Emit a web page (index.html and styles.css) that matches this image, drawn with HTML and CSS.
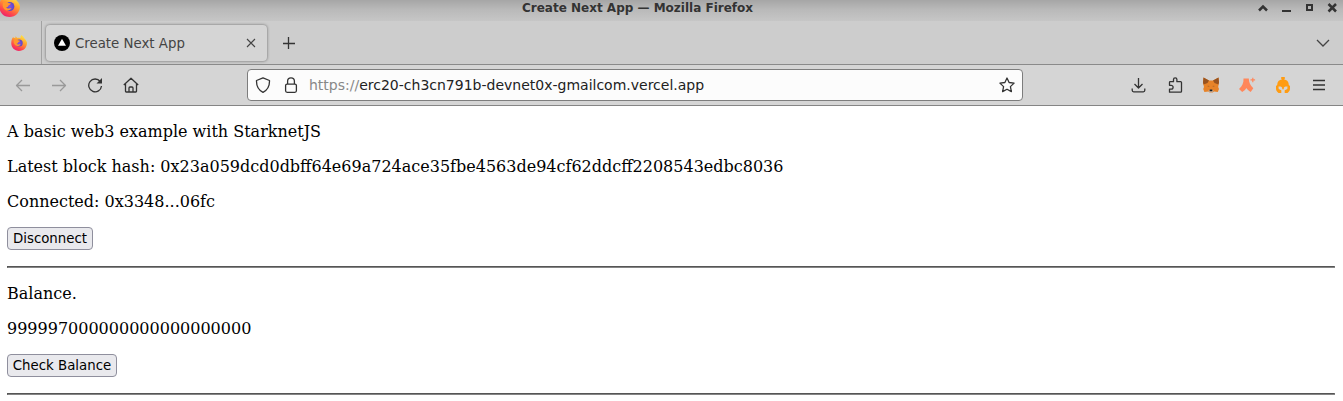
FILE: index.html
```html
<!DOCTYPE html>
<html lang="en">
<head>
<meta charset="utf-8">
<title>Create Next App</title>
<link rel="stylesheet" href="styles.css">
</head>
<body>
<svg width="0" height="0" class="defs">
  <defs>
    <linearGradient id="flame" x1=".8" y1="0" x2=".25" y2="1"><stop offset="0" stop-color="#fff04a"/><stop offset=".4" stop-color="#ffa12d"/><stop offset=".75" stop-color="#ff474c"/><stop offset="1" stop-color="#e91b72"/></linearGradient>
    <radialGradient id="globe"><stop offset="0" stop-color="#8651e5"/><stop offset="1" stop-color="#5b48c4"/></radialGradient>
    <symbol id="firefox" viewBox="0 0 16 16">
      <path fill="url(#flame)" d="M15.400 6.200c-.4-1-1.100-2-1.800-2.400-.8-1.700-1.500-2.500-3.300-3.800-.9 1.200-.9 2.400-.7 3.200-1-.3-2.200-.5-3.300-.3L4.500 1.300 4.300 3.200C3.400 3 2.700 2.900 2 2.300 1 3.500.4 5 .3 7.600-.1 12.200 3.300 16 8 16c4.700 0 8-3.600 8-8 0-.6-.2-1.300-.6-1.800z"/>
      <circle cx="8.200" cy="8" r="3.500" fill="url(#globe)"/>
      <path fill="#ff982e" d="M3.300 4.800c1.500-.9 3-.5 3.800.5l2 .5c-.2.9-1.600 1.100-2 1.700-.2.900-.8 1.200-1.700 1.200 1.500 1.400 3 .3 4.200.7-.8 1.500-3.800 2.300-5.500.6C2.500 8.500 2.500 6.500 3.300 4.800z"/>
    </symbol>
  </defs>
</svg>
<header class="titlebar">
  <svg class="app-icon" width="21" height="21"><use href="#firefox"/></svg>
  <span class="window-title">Create Next App — Mozilla Firefox</span>
  <svg class="window-controls" width="80" height="16" viewBox="0 0 80 16" fill="none" stroke="#333" stroke-width="2.500"><path d="M1 10.500l4-4 4 4"/><path d="M24 11h9" stroke-width="2"/><path d="M49 5h5v5h-5z" stroke-width="2"/><path d="M70.500 4l7.500 7.500m0-7.500l-7.500 7.500"/></svg>
</header>
<nav class="tabs">
  <div class="pinned"><svg width="16" height="16"><use href="#firefox"/></svg></div>
  <div class="tab">
    <svg width="16" height="16" viewBox="0 0 16 16"><circle cx="8" cy="8" r="8"/><path fill="#fff" d="M8 3.700l4 7H4z"/></svg>
    <span class="tab-title">Create Next App</span>
    <svg class="tab-close" width="10" height="10" viewBox="0 0 10 10" fill="none" stroke="#444" stroke-width="1.100"><path d="M1 1l8 8M9 1L1 9"/></svg>
  </div>
  <svg class="new-tab" width="12" height="12" viewBox="0 0 12 12" fill="none" stroke="#333" stroke-width="1.300"><path d="M0 6.500h12M5.500 0v12"/></svg>
  <svg class="all-tabs" width="14" height="8" viewBox="0 0 14 8" fill="none" stroke="#444" stroke-width="1.300"><path d="M1 1l6 6 6-6"/></svg>
</nav>
<div class="toolbar">
  <div class="nav-buttons">
    <svg class="muted" width="16" height="16" viewBox="0 0 16 16"><path d="M15 8.500H1.500M7 3L1.500 8.500 7 14"/></svg>
    <svg class="muted" width="16" height="16" viewBox="0 0 16 16"><path d="M1 8.500h13.500M9 3l5.500 5.500L9 14"/></svg>
    <svg width="16" height="16" viewBox="0 0 16 16"><path d="M13.200 4.500A6.400 6.400 0 1 0 14.500 9"/><path fill="#333" stroke="none" d="M15 1v5.500H9.500z"/></svg>
    <svg width="16" height="16" viewBox="0 0 16 16"><path d="M.8 8L8 1.200 15.200 8M2.500 7v7.300q0 .7.700.7h9.600q.7 0 .7-.7V7M6 15v-4q0-1 1-1h2q1 0 1 1v4"/></svg>
  </div>
  <div class="address">
    <svg width="16" height="16" viewBox="0 0 16 16"><path d="M8 .8L14.500 3.500C14.700 9 12.500 13 8 15.300 3.500 13 1.300 9 1.500 3.500z"/></svg>
    <svg width="16" height="16" viewBox="0 0 16 16"><rect x="2.600" y="7.100" width="10.800" height="8.200" rx="1.500"/><path d="M4.600 7V4.200a3.400 3.400 0 0 1 6.800 0V7"/></svg>
    <span class="url"><span class="scheme">https://</span>erc20-ch3cn791b-devnet0x-gmailcom.vercel.app</span>
    <svg width="16" height="16" viewBox="0 0 16 16"><path d="M8 1l2.100 4.500 5 .6-3.700 3.500 1 5L8 12.200l-4.400 2.400 1-5L.9 6.100l5-.6z"/></svg>
  </div>
  <div class="extensions">
    <svg width="16" height="16" viewBox="0 0 16 16"><path d="M8.500 1v10M4.500 7l4 4 4-4M2.200 11.500v1.800q0 1.500 1.500 1.500h9.600q1.500 0 1.500-1.500v-1.800"/></svg>
    <svg width="16" height="16" viewBox="0 0 16 16"><path d="M1.500 15.200V12.100h1.700a1.900 1.900 0 0 0 0-3.800H1.500V5.400q0-.7.700-.7H5.500V2.500a1.700 1.700 0 0 1 3.400 0v2.200h3.700q.9 0 .9.900v8.700q0 .9-.9.900z"/></svg>
    <svg class="picture" width="16" height="16" viewBox="0 0 16 16"><path fill="#e78328" d="M.5.500L6 3.500h4L15.500.5l.5 5-.8 4.500.8 2-1.200 3-3.800-.6-1.300 1.200h-3l-1.300-1.200L1.400 15 .2 12l.8-2L0 6z"/><path fill="#98531f" d="M.5.500L6 3.500 4.500 6 .6 7.500 0 5.500zM15.500.5L10 3.500 11.500 6l3.900 1.500.6-2z"/><path fill="#a9652d" d="M4 9l2-.3.400 1.400zm8 0l-2-.3-.4 1.400z"/><path fill="#d5b49b" d="M5.300 13.500l1.700-.7h2l1.700.7L9.500 15.500h-3z"/><path fill="#172026" d="M6.800 12.600h2.400l.3 1.700h-3z"/></svg>
    <svg class="picture" width="18" height="16" viewBox="0 0 18 16"><path fill="#ff875b" d="M4.500 1.500h5.300C9.800 5.500 11.300 8 14.300 11.200L11.700 15C9.600 13.500 8.200 12.200 7.300 11 6.400 12.600 5.200 13.800 3.200 15L0 12.100C3.300 9 4.800 6 4.500 1.500zM13.200.8h1.200v1.500h1.700v1.200h-1.700v1.700h-1.200V3.500h-1.700V2.300h1.700z"/></svg>
    <svg class="picture" width="16" height="16" viewBox="0 0 16 16"><path fill="#ff9c12" fill-rule="evenodd" d="M6.200 0h3.600v2L9 2.600c2.900.2 4.800 2 4.800 5.400l1.200 1v2.500c0 2-1 3.300-2.500 4.500h-9C2 14.800 1 13.500 1 11.500V9l1.200-1c0-3.400 1.900-5.200 4.800-5.400L6.200 2zM3.500 9.500L3.700 12l2.600 1.300V16h3.400v-2.700l2.600-1.300.2-2.500c-1.500-.3-3.200 0-3.700 1.300v1.500H7.200v-1.500C6.700 9.500 5 9.200 3.500 9.500z"/></svg>
    <svg width="16" height="16" viewBox="0 0 16 16"><path d="M2 3.500h12M2 8h12M2 12.500h12"/></svg>
  </div>
</div>
<main class="page">
  <p>A basic web3 example with StarknetJS</p>
  <p>Latest block hash: 0x23a059dcd0dbff64e69a724ace35fbe4563de94cf62ddcff2208543edbc8036</p>
  <p>Connected: 0x3348...06fc</p>
  <button class="disconnect">Disconnect</button>
  <hr>
  <p>Balance.</p>
  <p>999997000000000000000000</p>
  <button class="check">Check Balance</button>
  <hr>
</main>
</body>
</html>
```

FILE: styles.css
```css
* { box-sizing: border-box; }
body { margin: 0; height: 401px; overflow: hidden; background: #fff; font-family: "DejaVu Sans", sans-serif; color: #000; }
svg { display: block; flex: none; }
.defs { position: absolute; }
.titlebar { height: 21px; display: flex; align-items: flex-start; overflow: hidden; background: linear-gradient(#a6a6a6, #b9b9b9 45%, #c6c6c6); }
.app-icon { margin: -4px 0 0 -1px; }
.window-title { font-size: 12px; font-weight: bold; line-height: 15px; color: #333; margin: 1px 0 0 502px; white-space: nowrap; }
.window-controls { margin: 0 5px 0 auto; }
.tabs { height: 44px; display: flex; align-items: center; background: #cdcdcd; border-bottom: 1px solid #8a8a8a; }
.pinned { width: 42px; height: 43px; padding: 14px 0 0 11px; border-right: 1px solid #a2a2a2; }
.tab { width: 221px; height: 36px; margin-left: 4px; padding: 0 11px 0 8px; display: flex; align-items: center; background: #d5d5d5; border-radius: 4px; box-shadow: 0 0 3px rgba(0, 0, 0, .5); }
.tab-title { flex: 1; margin-left: 5px; padding-top: 2px; font-size: 13.333px; color: #444; white-space: nowrap; }
.new-tab { margin-left: 16px; }
.all-tabs { margin: 0 13px 0 auto; }
.toolbar { height: 41px; padding: 0 16px 0 15px; display: flex; align-items: center; background: #d5d5d5; border-bottom: 1px solid #858585; }
.toolbar svg { fill: none; stroke: #333; stroke-width: 1.3; stroke-linejoin: round; }
.toolbar .muted { stroke: #999; }
.toolbar .picture { stroke: none; }
.nav-buttons { display: flex; gap: 20px; }
.address { width: 776px; height: 32px; margin-left: 108px; padding: 0 7px; display: flex; align-items: center; gap: 12px; background: #fcfcfc; border: 1px solid #7d7d7d; border-radius: 4px; }
.url { flex: 1; margin-left: -2px; font-size: 14px; color: #222; white-space: nowrap; }
.scheme { color: #888; }
.extensions { margin-left: auto; display: grid; grid-template-columns: 38px 35px 36px 36px 36px 16px; align-items: center; }
.page { padding: 16px 8px 0 7px; font-family: "DejaVu Serif", serif; font-size: 16px; line-height: 19px; }
.page p { margin: 0 0 16px; white-space: nowrap; }
.page button { display: block; height: 23px; padding: 0; border: 1px solid #8f8f9d; border-radius: 4px; background: #e9e9ed; color: #000; font: 13.333px/19px "DejaVu Sans", sans-serif; white-space: nowrap; }
.disconnect { width: 86px; }
.check { width: 110px; }
.page hr { height: 2px; margin: 16px 0; border: 1px solid; border-color: #555 #858585 #858585 #555; }
```
